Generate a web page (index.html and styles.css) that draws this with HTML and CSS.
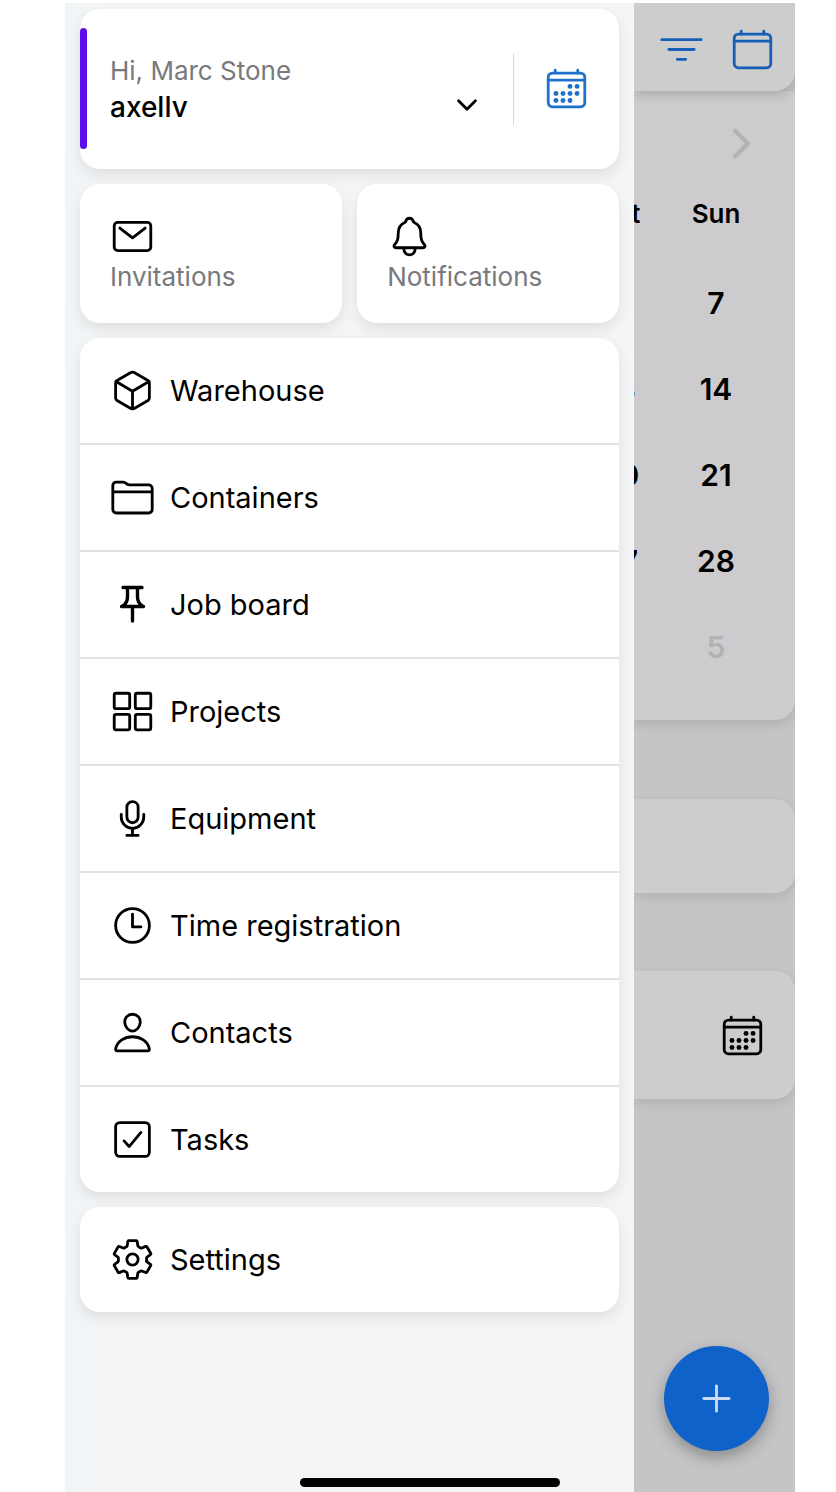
FILE: index.html
```html
<!DOCTYPE html>
<html lang="en">
<head>
    <meta charset="UTF-8">
    <meta name="viewport" content="width=device-width, initial-scale=1">
    <title>Menu</title>
    <link rel="stylesheet" href="styles.css">
</head>
<body>

    <div class="app">
        <aside class="drawer">
            <div class="card profile">
                <span class="profile-bar"></span>
                <button class="account">
                    <span class="account-text">
                        <span class="greeting">Hi, Marc Stone</span>
                        <span class="username">axellv</span>
                    </span>
                    <svg class="icon icon-small icon-bold" viewBox="0 0 512 512"><path d="M112 184l144 144 144-144"/></svg>
                </button>
                <button class="profile-calendar">
                    <svg class="icon" viewBox="0 0 512 512">
                        <rect x="48" y="80" width="416" height="384" rx="48"/>
                        <path d="M128 48v32M384 48v32M464 160H48"/>
                        <g class="dots"><circle cx="296" cy="232" r="28"/><circle cx="376" cy="232" r="28"/><circle cx="136" cy="312" r="28"/><circle cx="216" cy="312" r="28"/><circle cx="296" cy="312" r="28"/><circle cx="376" cy="312" r="28"/><circle cx="136" cy="392" r="28"/><circle cx="216" cy="392" r="28"/><circle cx="296" cy="392" r="28"/></g>
                    </svg>
                </button>
            </div>

            <div class="tiles">
                <a href="#" class="card tile">
                    <svg class="icon" viewBox="0 0 512 512"><rect x="48" y="96" width="416" height="320" rx="40"/><path d="M112 160l144 112 144-112"/></svg>
                    <span>Invitations</span>
                </a>
                <a href="#" class="card tile">
                    <svg class="icon" viewBox="0 0 512 512"><path d="M427.68 351.43C402 320 383.87 304 383.87 217.35 383.87 138 343.35 109.73 310 96c-4.43-1.82-8.6-6-9.95-10.55C294.2 65.54 277.8 48 256 48s-38.21 17.55-44 37.47c-1.35 4.6-5.52 8.71-9.95 10.53-33.39 13.75-73.87 41.92-73.87 121.35C128.13 304 110 320 84.32 351.43 73.68 364.45 83 384 101.61 384h308.88c18.51 0 27.77-19.61 17.19-32.57zM320 384v16a64 64 0 01-128 0v-16"/></svg>
                    <span>Notifications</span>
                </a>
            </div>

            <nav class="card menu">
                <a href="#" class="menu-item">
                    <svg class="icon" viewBox="0 0 512 512"><path d="M448 341.37V170.61A32 32 0 00432.11 143l-152-88.46a47.94 47.94 0 00-48.24 0L79.89 143A32 32 0 0064 170.61v170.76A32 32 0 0079.89 369l152 88.46a48 48 0 0048.24 0l152-88.46A32 32 0 00448 341.37z"/><path d="M69 153.99l187 110 187-110M256 463.99v-200"/></svg>
                    <span>Warehouse</span>
                </a>
                <a href="#" class="menu-item">
                    <svg class="icon" viewBox="0 0 512 512"><path d="M440 432H72a40 40 0 01-40-40V120a40 40 0 0140-40h75.89a40 40 0 0122.19 6.72l27.84 18.56a40 40 0 0022.19 6.72H440a40 40 0 0140 40v240a40 40 0 01-40 40zM32 192h448"/></svg>
                    <span>Containers</span>
                </a>
                <a href="#" class="menu-item">
                    <svg class="icon pin" viewBox="0 0 45 45"><path d="M13 5.5h19M11.5 24.5h22M22.5 25v14M17.5 6v9c0 4-1.5 7-5 9M27.5 6v9c0 4 1.500 7 5 9"/></svg>
                    <span>Job board</span>
                </a>
                <a href="#" class="menu-item">
                    <svg class="icon" viewBox="0 0 512 512"><rect x="48" y="48" width="176" height="176" rx="20"/><rect x="288" y="48" width="176" height="176" rx="20"/><rect x="48" y="288" width="176" height="176" rx="20"/><rect x="288" y="288" width="176" height="176" rx="20"/></svg>
                    <span>Projects</span>
                </a>
                <a href="#" class="menu-item">
                    <svg class="icon" viewBox="0 0 512 512"><path d="M192 448h128M384 208v32c0 70.4-57.6 128-128 128h0c-70.4 0-128-57.6-128-128v-32M256 368v80"/><path d="M256 64a63.68 63.68 0 00-64 64v111c0 35.2 29 65 64 65s64-29 64-65V128c0-36-28-64-64-64z"/></svg>
                    <span>Equipment</span>
                </a>
                <a href="#" class="menu-item">
                    <svg class="icon" viewBox="0 0 512 512"><circle cx="256" cy="256" r="192"/><path d="M256 128v144h96"/></svg>
                    <span>Time registration</span>
                </a>
                <a href="#" class="menu-item">
                    <svg class="icon" viewBox="0 0 512 512"><path d="M344 144c-3.92 52.87-44 96-88 96s-84.15-43.12-88-96c-4-55 35-96 88-96s92 42 88 96z"/><path d="M256 304c-87 0-175.3 48-191.64 138.6C62.39 453.52 68.57 464 80 464h352c11.44 0 17.62-10.48 15.65-21.4C431.3 352 343 304 256 304z"/></svg>
                    <span>Contacts</span>
                </a>
                <a href="#" class="menu-item">
                    <svg class="icon" viewBox="0 0 512 512"><rect x="64" y="64" width="384" height="384" rx="48"/><path d="M352 176L217.6 336 160 272"/></svg>
                    <span>Tasks</span>
                </a>
            </nav>

            <nav class="card menu">
                <a href="#" class="menu-item">
                    <svg class="icon" viewBox="0 0 512 512"><circle cx="256" cy="256" r="64"/><path d="M416.39 256a154.34 154.34 0 01-1.53 20.79l45.21 35.46a10.81 10.81 0 012.45 13.75l-42.77 74a10.81 10.81 0 01-13.14 4.59l-44.9-18.08a16.11 16.11 0 00-15.17 1.75A164.48 164.48 0 01325 400.8a15.94 15.94 0 00-8.82 12.14l-6.73 47.89a11.08 11.08 0 01-10.68 9.17h-85.54a11.11 11.11 0 01-10.69-8.87l-6.72-47.82a16.07 16.07 0 00-9-12.22 155.3 155.3 0 01-21.46-12.57 16 16 0 00-15.11-1.71l-44.89 18.07a10.81 10.81 0 01-13.14-4.58l-42.77-74a10.8 10.8 0 012.45-13.75l38.21-30a16.05 16.05 0 006-14.08c-.36-4.17-.58-8.33-.58-12.5s.21-8.27.58-12.35a16 16 0 00-6.07-13.94l-38.19-30A10.81 10.81 0 0149.48 186l42.77-74a10.81 10.81 0 0113.14-4.59l44.9 18.08a16.11 16.11 0 0015.17-1.75A164.48 164.48 0 01187 111.2a15.94 15.94 0 008.82-12.14l6.73-47.89A11.08 11.08 0 01213.23 42h85.54a11.11 11.11 0 0110.69 8.87l6.72 47.82a16.07 16.07 0 009 12.22 155.3 155.3 0 0121.46 12.57 16 16 0 0015.11 1.71l44.89-18.07a10.81 10.81 0 0113.14 4.58l42.77 74a10.8 10.8 0 01-2.45 13.75l-38.21 30a16.05 16.05 0 00-6.05 14.08c.33 4.14.55 8.3.55 12.47z"/></svg>
                    <span>Settings</span>
                </a>
            </nav>
        </aside>

        <main class="page">
            <header class="toolbar">
                <button><svg class="icon" viewBox="0 0 512 512"><path d="M32 144h448M112 256h288M208 368h96"/></svg></button>
                <button><svg class="icon" viewBox="0 0 512 512"><rect x="48" y="80" width="416" height="384" rx="48"/><path d="M128 48v32M384 48v32M464 160H48"/></svg></button>
            </header>

            <section class="calendar">
                <button class="next-month"><svg class="icon icon-bold" viewBox="0 0 512 512"><path d="M184 112l144 144-144 144"/></svg></button>
                <table class="days">
                    <thead>
                        <tr><th>Sat</th><th>Sun</th></tr>
                    </thead>
                    <tbody>
                        <tr><td></td><td>7</td></tr>
                        <tr><td>13</td><td>14</td></tr>
                        <tr><td>20</td><td>21</td></tr>
                        <tr><td>27</td><td>28</td></tr>
                        <tr><td></td><td class="muted">5</td></tr>
                    </tbody>
                </table>
            </section>

            <section class="panel panel-empty"></section>

            <section class="panel panel-date">
                <button>
                    <svg class="icon" viewBox="0 0 512 512">
                        <rect x="48" y="80" width="416" height="384" rx="48"/>
                        <path d="M128 48v32M384 48v32M464 160H48"/>
                        <g class="dots"><circle cx="296" cy="232" r="28"/><circle cx="376" cy="232" r="28"/><circle cx="136" cy="312" r="28"/><circle cx="216" cy="312" r="28"/><circle cx="296" cy="312" r="28"/><circle cx="376" cy="312" r="28"/><circle cx="136" cy="392" r="28"/><circle cx="216" cy="392" r="28"/><circle cx="296" cy="392" r="28"/></g>
                    </svg>
                </button>
            </section>

            <button class="fab"><svg class="icon" viewBox="0 0 512 512"><path d="M256 112v288M112 256h288"/></svg></button>
        </main>

        <div class="home-indicator"></div>
    </div>

</body>
</html>
```

FILE: styles.css
```css
* {
    box-sizing: border-box;
}

body {
    margin: 0;
    padding: 3px 41px 0 65px;
    background-color: #fff;
    color: #000;
    font-family: Inter, "Liberation Sans", sans-serif;
}

button {
    padding: 0;
    border: none;
    background: none;
    color: inherit;
    font: inherit;
    cursor: pointer;
}

a {
    color: inherit;
    text-decoration: none;
}

.icon {
    display: block;
    flex: none;
    width: 45px;
    height: 45px;
    fill: none;
    stroke: currentColor;
    stroke-width: 32;
    stroke-linecap: round;
    stroke-linejoin: round;
}

.icon-small {
    width: 30px;
    height: 30px;
}

.icon-bold {
    stroke-width: 48;
}

.pin {
    stroke-width: 3.4;
}

.dots {
    fill: currentColor;
    stroke: none;
}

.app {
    position: relative;
    display: flex;
    min-height: calc(100vh - 3px);
}

/* drawer */

.drawer {
    display: flex;
    flex-direction: column;
    gap: 15px;
    width: 78%;
    padding: 6px 15px 15px;
    background: linear-gradient(to right, #eff5f6, #f4f5f7 30px);
}

.card {
    background-color: #fff;
    border-radius: 20px;
    box-shadow: 0 6px 14px rgba(0, 0, 0, 0.09);
}

.profile {
    display: flex;
    align-items: center;
    padding: 19px 0 20px;
}

.profile-bar {
    width: 7px;
    height: 121px;
    border-radius: 4px;
    background-color: #5b0eea;
}

.account {
    flex: 1;
    display: flex;
    align-items: flex-end;
    justify-content: space-between;
    padding: 0 31px 0 23px;
    border-right: 1px solid #d8d8da;
    text-align: left;
}

.account-text {
    display: flex;
    flex-direction: column;
    font-size: 26px;
    line-height: 36px;
}

.account .icon {
    margin-bottom: 5px;
}

.greeting {
    color: #77797c;
}

.username {
    font-size: 28px;
    font-weight: 500;
}

.profile-calendar {
    display: flex;
    justify-content: center;
    width: 105px;
    color: #1f72cc;
}

.tiles {
    display: grid;
    grid-template-columns: 1fr 1fr;
    gap: 15px;
}

.tile {
    padding: 30px 30px 28px;
    font-size: 26px;
    line-height: 36px;
}

.tile span {
    color: #77797c;
}

.menu-item {
    display: flex;
    align-items: center;
    gap: 15px;
    padding: 30px;
    font-size: 29px;
    line-height: 45px;
}

.menu-item + .menu-item {
    border-top: 2px solid #e2e2e4;
}

/* dimmed page behind the drawer */

.page {
    position: relative;
    flex: 1;
    min-width: 0;
    overflow: hidden;
    background-color: #c5c5c7;
}

.toolbar {
    position: relative;
    display: flex;
    justify-content: flex-end;
    gap: 26px;
    padding: 24px 20px 19px;
    border-radius: 0 0 20px 0;
    background-color: #cdcdce;
    box-shadow: 0 4px 12px rgba(0, 0, 0, 0.16);
    color: #155fb4;
}

.calendar {
    display: flex;
    flex-direction: column;
    align-items: flex-end;
    padding: 30px 31px 30px;
    border-radius: 0 0 20px 0;
    background-color: #cdcbcd;
    box-shadow: 0 4px 12px rgba(0, 0, 0, 0.12);
}

.next-month {
    color: #b2b1b3;
}

.days {
    table-layout: fixed;
    width: 192px;
    border-collapse: collapse;
    font-size: 30px;
    font-weight: 600;
    text-align: center;
}

.days th {
    height: 94px;
    padding: 0;
    font-size: 26px;
    font-weight: 600;
}

.days td {
    height: 86px;
    padding: 0;
}

.days .muted {
    color: #b2b1b3;
}

.panel {
    display: flex;
    align-items: center;
    justify-content: flex-end;
    padding: 0 30px;
    border-radius: 0 20px 20px 0;
    background-color: #cdcdce;
    box-shadow: 0 4px 12px rgba(0, 0, 0, 0.1);
}

.panel-empty {
    min-height: 94px;
    margin: 79px 0 78px;
}

.panel-date {
    min-height: 128px;
}

.fab {
    position: absolute;
    right: 26px;
    bottom: 41px;
    display: flex;
    align-items: center;
    justify-content: center;
    width: 105px;
    height: 105px;
    border-radius: 50%;
    background-color: #0e62c9;
    box-shadow: 0 6px 16px rgba(0, 0, 0, 0.3);
    color: #cddcf0;
}

.home-indicator {
    position: absolute;
    bottom: 5px;
    left: 50%;
    width: 260px;
    height: 9px;
    margin-left: -130px;
    border-radius: 5px;
    background-color: #000;
}
```
